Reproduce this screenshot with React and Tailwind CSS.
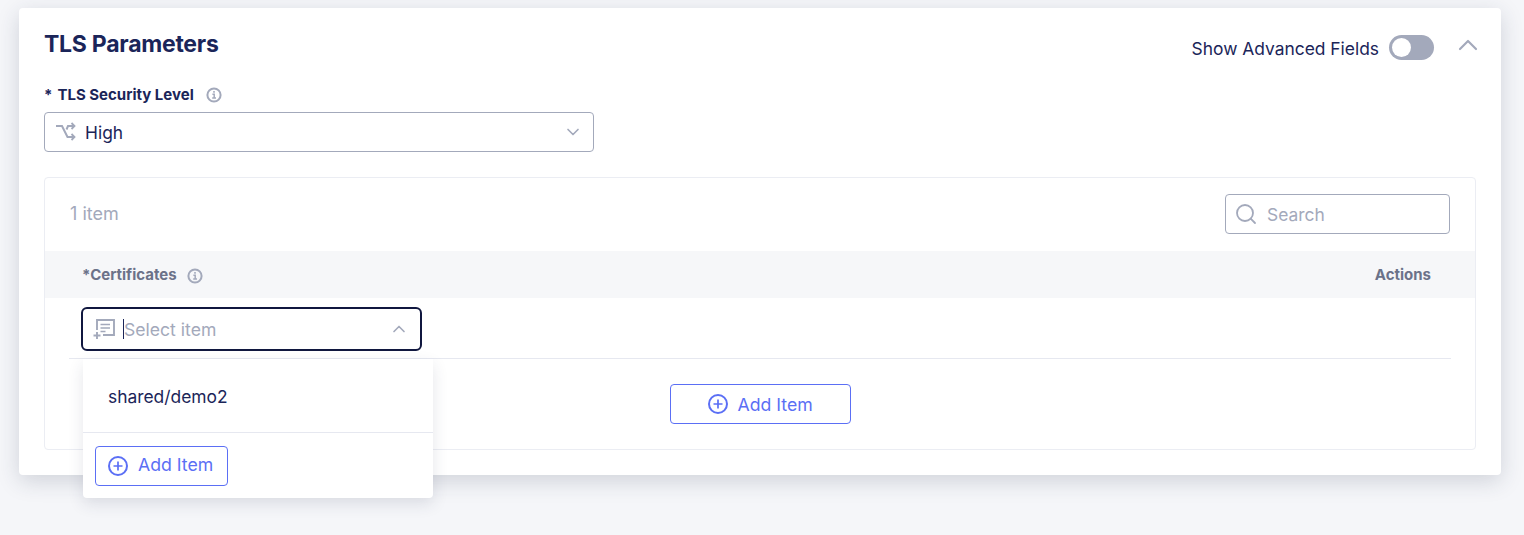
import React from "react";
import { ChevronDown, ChevronUp, Search } from "lucide-react";

const AddIcon = () => (
  <svg width="20" height="20" viewBox="0 0 20 20" fill="none" stroke="#5b6ff5" strokeWidth="2">
    <circle cx="10" cy="10" r="9" />
    <path d="M10 5.5v9M5.5 10h9" strokeWidth="1.7" />
  </svg>
);

const InfoIcon = ({ className }) => (
  <svg className={className} width="16" height="16" viewBox="0 0 16 16" fill="none" stroke="#a3a9bb" strokeWidth="2">
    <circle cx="8" cy="8" r="6.6" />
    <path d="M6.4 7.2h1.8v3.6M6.2 11h3.8" strokeWidth="1.5" />
    <path d="M7.2 4.8h1.6" strokeWidth="1.7" />
  </svg>
);

const RouteIcon = () => (
  <svg width="20" height="20" viewBox="0 0 20 20" fill="none" stroke="#a3a9bb" strokeWidth="2">
    <path d="M0 4h6l5.5 11H18" />
    <path d="M10.5 7.5L12 4h6" />
    <path d="M15.5 1l3 3-3 3" strokeWidth="1.8" />
    <path d="M15.5 12l3 3-3 3" strokeWidth="1.8" />
  </svg>
);

const ItemIcon = () => (
  <svg width="22" height="22" viewBox="0 0 22 22" fill="none" stroke="#a3a9bb" strokeWidth="1.9">
    <path d="M4 12V2h17v15H10" />
    <path d="M7.5 6.5h9.5M7.5 10h9.5M7.5 13.5h5" strokeWidth="1.7" />
    <path d="M4 14v7M0.5 17.5h7" />
  </svg>
);

const App = () => {
  return (
    <div className="h-[535px] w-[1524px] overflow-hidden bg-[#f5f6f9] pt-2 pl-[19px] font-['Inter',sans-serif] text-[#1b2559]">
      <div className="relative h-[467px] w-[1482px] rounded bg-white px-[25px] shadow-[0_6px_22px_rgba(40,50,80,0.18)]">
        <div className="flex h-[75px] items-start justify-between">
          <h2 className="mt-[21px] text-[23px] leading-[30px] font-bold tracking-[-0.25px]">TLS Parameters</h2>
          <div className="mt-[21px] mr-[-8px] flex items-center">
            <span className="pt-[3px] text-[17.4px] leading-6">Show Advanced Fields</span>
            <div className="ml-[10px] flex h-[25px] w-[45px] items-center rounded-full bg-[#a3a9bb] pl-[3px]">
              <div className="h-[19px] w-[19px] rounded-full bg-white" />
            </div>
            <ChevronUp className="mb-[5px] ml-[18px]" size={32} color="#a3a9bb" strokeWidth={1.6} />
          </div>
        </div>

        <div className="flex h-[29px] items-start pt-[1px] text-[15px] leading-[22px] font-bold">
          <span className="mr-[5px]">*</span>
          <span>TLS Security Level</span>
          <InfoIcon className="mt-[3px] ml-[12px]" />
        </div>
        <div className="flex h-[40px] w-[550px] items-center rounded border border-[#a3a9bb] pr-[10px] pl-[11px]">
          <RouteIcon />
          <span className="ml-[9px] flex-1 pt-[2px] text-[17.4px]">High</span>
          <ChevronDown size={20} color="#a3a9bb" strokeWidth={2} />
        </div>

        <div className="mt-[25px] h-[273px] w-[1432px] rounded border border-[#ebedf3]">
          <div className="flex h-[73px] items-start justify-between px-[25px] pt-[16px]">
            <span className="mt-[8px] text-[18px] leading-6 text-[#a3a9bb]">1 item</span>
            <div className="flex h-[40px] w-[225px] items-center rounded border border-[#a3a9bb] pl-[8px]">
              <Search size={24} color="#a3a9bb" strokeWidth={1.8} />
              <span className="ml-[9px] pt-[2px] text-[17.4px] text-[#a3a9bb]">Search</span>
            </div>
          </div>
          <div className="flex h-[47px] items-center justify-between bg-[#f6f7f9] pt-[2px] pr-[44px] pl-[37px] text-[15px] font-bold text-[#6b7289]">
            <div className="flex items-center">
              <span>*Certificates</span>
              <InfoIcon className="ml-[10px]" />
            </div>
            <span>Actions</span>
          </div>
          <div className="mx-[24px] h-[61px] border-b border-[#e6e8f0] pt-[9px] pl-[12px]">
            <div className="flex h-[44px] w-[341px] items-center rounded-md border-2 border-[#10173f] pr-[11px] pl-[10px]">
              <ItemIcon />
              <span className="ml-[8px] h-[20px] w-px bg-[#1b2559]" />
              <span className="flex-1 pt-[2px] text-[17.6px] text-[#a3a9bb]">Select item</span>
              <ChevronUp size={20} color="#a3a9bb" strokeWidth={2} />
            </div>
          </div>
          <div className="flex justify-center pt-[25px]">
            <button className="flex h-[40px] w-[181px] items-center rounded border border-[#5b6ff5] pl-[37px] text-[17.7px] text-[#5b6ff5]">
              <AddIcon />
              <span className="ml-[10px] pt-[2px]">Add Item</span>
            </button>
          </div>
        </div>

        <div className="absolute top-[351px] left-[64px] z-10 h-[139px] w-[350px] rounded-b bg-white shadow-[0_6px_16px_rgba(40,50,80,0.12)]">
          <div className="flex h-[74px] items-center border-b border-[#e6e8f0] pt-[4px] pl-[25px] text-[17.4px]">shared/demo2</div>
          <div className="pt-[13px] pl-[12px]">
            <button className="flex h-[40px] w-[133px] items-center rounded border border-[#5b6ff5] pl-[12px] text-[17.7px] text-[#5b6ff5]">
              <AddIcon />
              <span className="ml-[10px] pb-[2px]">Add Item</span>
            </button>
          </div>
        </div>
      </div>
    </div>
  );
};

export default App;
